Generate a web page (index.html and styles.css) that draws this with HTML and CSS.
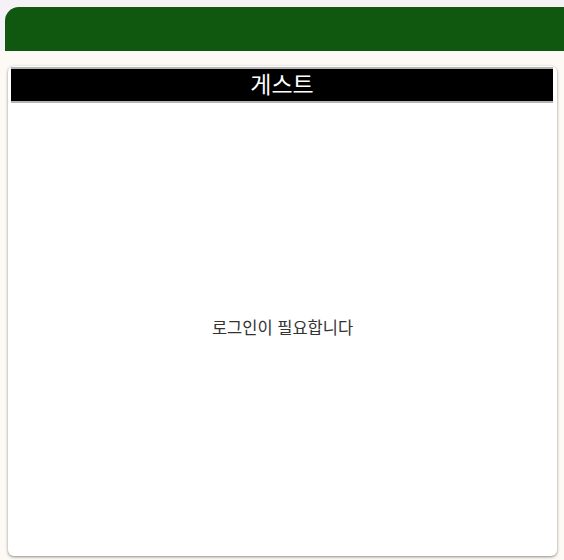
FILE: index.html
```html
<!DOCTYPE html>
<html lang="ko">
<head>
<meta charset="utf-8">
<link rel="stylesheet" href="styles.css">
</head>
<body>
<div class="top">
  <header class="appbar"></header>
</div>
<main class="main">
  <section class="card">
    <h1 class="card-title">게스트</h1>
    <div class="card-body">
      <p class="message">로그인이 필요합니다</p>
    </div>
  </section>
</main>
</body>
</html>
```
FILE: styles.css
```css
html, body {
  margin: 0;
  padding: 0;
  height: 100%;
}
body {
  background: #fdf9f4;
  font-family: "Noto Sans CJK KR", "Noto Sans", sans-serif;
  overflow: hidden;
}
.top {
  background: #f4f2f7;
  padding: 7px 0 0 5px;
}
.appbar {
  height: 44px;
  background: #10570f;
  border-top-left-radius: 14px;
}
.main {
  padding: 15px 7px 0 8px;
}
.card {
  background: #ffffff;
  border-radius: 6px;
  box-shadow: 0 1px 3px rgba(0, 0, 0, 0.45);
  height: 489px;
  display: flex;
  flex-direction: column;
  padding-top: 1px;
}
.card-title {
  margin: 0 4px 0 3px;
  height: 28px;
  padding-bottom: 4px;
  background: #000000;
  border-top: 2px solid #b4b4b4;
  border-bottom: 2px solid #b4b4b4;
  color: #ffffff;
  font-size: 23px;
  font-weight: 400;
  line-height: 28px;
  text-align: center;
}
.card-body {
  flex: 1;
  display: flex;
  align-items: center;
  justify-content: center;
  padding-bottom: 6px;
}
.message {
  margin: 0;
  font-size: 16.5px;
  color: #333333;
}
```
